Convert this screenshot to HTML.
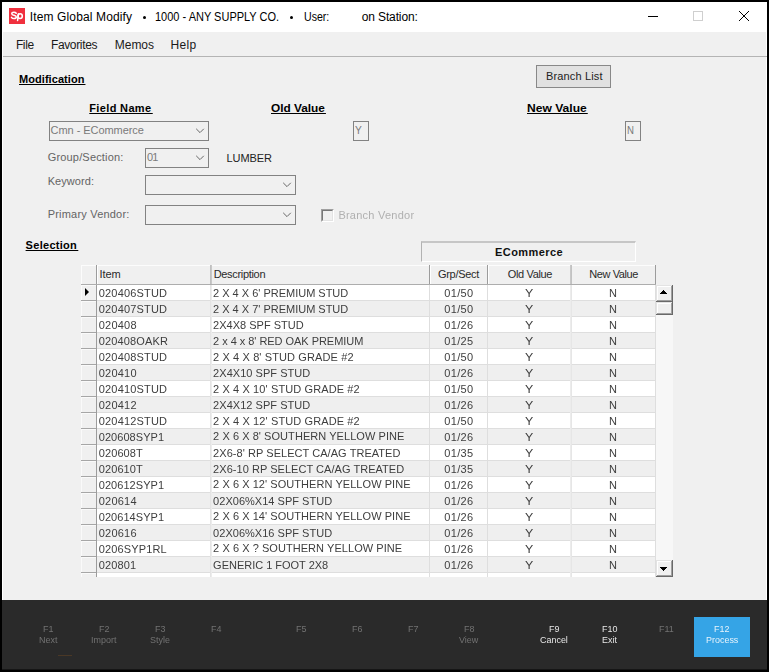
<!DOCTYPE html>
<html>
<head>
<meta charset="utf-8">
<title>Item Global Modify</title>
<style>
html,body{margin:0;padding:0;}
body{width:769px;height:672px;background:#000;overflow:hidden;position:relative;font-family:"Liberation Sans",sans-serif;}
.a{position:absolute;box-sizing:border-box;}
.t{position:absolute;white-space:nowrap;transform-origin:0 50%;font-family:"Liberation Sans",sans-serif;}
.b{font-weight:700;}
.u{text-decoration:underline;text-decoration-thickness:1px;text-underline-offset:1px;}
.combo{background:#f0f0f0;border:1px solid #828282;}
.hl{background:#a0a0a0;}
</style>
</head>
<body>
<!-- window -->
<div class="a" style="left:2px;top:2px;width:765px;height:668px;background:#f0f0f0;"></div>
<!-- title bar -->
<div class="a" style="left:2px;top:2px;width:765px;height:30px;background:#fff;"></div>
<div class="a" style="left:2px;top:32px;width:1px;height:568px;background:#fff;"></div>
<div class="a" style="left:766px;top:32px;width:1px;height:568px;background:#fff;"></div>
<!-- app icon -->
<svg class="a" style="left:9px;top:8px;" width="16" height="16" viewBox="0 0 16 16"><rect width="16" height="16" fill="#f0303e"/><g fill="none" stroke="#fff" stroke-width="1.55" stroke-linecap="round" stroke-linejoin="round"><path d="M7.2 5.3 C6.6 4.4 5.8 4.2 4.9 4.2 C3.5 4.2 2.8 5 2.8 5.8 C2.8 7.9 7.3 6.7 7.3 8.9 C7.3 10 6.3 10.5 5 10.5 C3.9 10.5 3 10.1 2.5 9.3"/><ellipse cx="11.1" cy="8.1" rx="2.2" ry="2.4"/><path d="M9.5 5.9 L8.6 12.5"/></g></svg>
<div class="a" style="left:142.6px;top:15.9px;width:3.2px;height:3.2px;border-radius:50%;background:#000;"></div>
<div class="a" style="left:289.8px;top:15.7px;width:3.2px;height:3.2px;border-radius:50%;background:#000;"></div>
<!-- window controls -->
<div class="a" style="left:648px;top:16px;width:10px;height:1px;background:#000;"></div>
<div class="a" style="left:693px;top:11px;width:10px;height:10px;border:1px solid #cfcfcf;"></div>
<svg class="a" style="left:737px;top:9px;" width="14" height="14" viewBox="0 0 14 14"><path d="M2 2 L12 12 M12 2 L2 12" stroke="#000" stroke-width="1" fill="none"/></svg>
<!-- menu separator -->
<div class="a" style="left:3px;top:56px;width:764px;height:1px;background:#b4b4b4;"></div>

<!-- Branch List button -->
<div class="a" style="left:536px;top:65px;width:75px;height:23px;background:#e1e1e1;border:1px solid #888;"></div>

<!-- combos -->
<div class="a combo" style="left:49px;top:121px;width:160px;height:20px;"></div>
<div class="a combo" style="left:145px;top:148px;width:64px;height:20px;"></div>
<div class="a combo" style="left:145px;top:175px;width:151px;height:20px;"></div>
<div class="a combo" style="left:145px;top:205px;width:151px;height:20px;"></div>
<!-- chevrons -->
<svg class="a" style="left:195.4px;top:127.3px;" width="10" height="8" viewBox="0 0 10 8"><path d="M1.2 1.8 L5 5.6 L8.8 1.8" stroke="#686868" stroke-width="1" fill="none"/></svg>
<svg class="a" style="left:195.4px;top:154.3px;" width="10" height="8" viewBox="0 0 10 8"><path d="M1.2 1.8 L5 5.6 L8.8 1.8" stroke="#686868" stroke-width="1" fill="none"/></svg>
<svg class="a" style="left:282.2px;top:181.3px;" width="10" height="8" viewBox="0 0 10 8"><path d="M1.2 1.8 L5 5.6 L8.8 1.8" stroke="#686868" stroke-width="1" fill="none"/></svg>
<svg class="a" style="left:282.2px;top:211.3px;" width="10" height="8" viewBox="0 0 10 8"><path d="M1.2 1.8 L5 5.6 L8.8 1.8" stroke="#686868" stroke-width="1" fill="none"/></svg>
<!-- Y / N boxes -->
<div class="a combo" style="left:353px;top:121px;width:16px;height:20px;"></div>
<div class="a combo" style="left:625px;top:121px;width:16px;height:20px;"></div>
<!-- checkbox -->
<div class="a" style="left:321px;top:209px;width:13px;height:13px;background:#f0f0f0;border-top:1px solid #a0a0a0;border-left:1px solid #a0a0a0;border-right:1px solid #fff;border-bottom:1px solid #fff;"></div>
<div class="a" style="left:322px;top:210px;width:11px;height:11px;border-top:1px solid #787878;border-left:1px solid #787878;border-right:1px solid #e3e3e3;border-bottom:1px solid #e3e3e3;"></div>

<!-- ECommerce panel -->
<div class="a" style="left:421px;top:241px;width:215px;height:21px;background:#f0f0f0;border-top:2px solid #c6c6c6;border-left:1px solid #b2b2b2;border-right:1px solid #fff;border-bottom:1px solid #fff;"></div>

<!-- GRID -->
<div class="a" style="left:97px;top:285px;width:559px;height:292px;background:#ffffff;"></div>
<div class="a" style="left:97px;top:301px;width:558px;height:15px;background:#efefef;"></div>
<div class="a" style="left:97px;top:333px;width:558px;height:15px;background:#efefef;"></div>
<div class="a" style="left:97px;top:365px;width:558px;height:15px;background:#efefef;"></div>
<div class="a" style="left:97px;top:397px;width:558px;height:15px;background:#efefef;"></div>
<div class="a" style="left:97px;top:429px;width:558px;height:15px;background:#efefef;"></div>
<div class="a" style="left:97px;top:461px;width:558px;height:15px;background:#efefef;"></div>
<div class="a" style="left:97px;top:493px;width:558px;height:15px;background:#efefef;"></div>
<div class="a" style="left:97px;top:525px;width:558px;height:15px;background:#efefef;"></div>
<div class="a" style="left:97px;top:557px;width:558px;height:15px;background:#efefef;"></div>
<div class="a" style="left:97px;top:300px;width:559px;height:1px;background:#dedede;"></div>
<div class="a" style="left:97px;top:316px;width:559px;height:1px;background:#dedede;"></div>
<div class="a" style="left:97px;top:332px;width:559px;height:1px;background:#dedede;"></div>
<div class="a" style="left:97px;top:348px;width:559px;height:1px;background:#dedede;"></div>
<div class="a" style="left:97px;top:364px;width:559px;height:1px;background:#dedede;"></div>
<div class="a" style="left:97px;top:380px;width:559px;height:1px;background:#dedede;"></div>
<div class="a" style="left:97px;top:396px;width:559px;height:1px;background:#dedede;"></div>
<div class="a" style="left:97px;top:412px;width:559px;height:1px;background:#dedede;"></div>
<div class="a" style="left:97px;top:428px;width:559px;height:1px;background:#dedede;"></div>
<div class="a" style="left:97px;top:444px;width:559px;height:1px;background:#dedede;"></div>
<div class="a" style="left:97px;top:460px;width:559px;height:1px;background:#dedede;"></div>
<div class="a" style="left:97px;top:476px;width:559px;height:1px;background:#dedede;"></div>
<div class="a" style="left:97px;top:492px;width:559px;height:1px;background:#dedede;"></div>
<div class="a" style="left:97px;top:508px;width:559px;height:1px;background:#dedede;"></div>
<div class="a" style="left:97px;top:524px;width:559px;height:1px;background:#dedede;"></div>
<div class="a" style="left:97px;top:540px;width:559px;height:1px;background:#dedede;"></div>
<div class="a" style="left:97px;top:556px;width:559px;height:1px;background:#dedede;"></div>
<div class="a" style="left:97px;top:572px;width:559px;height:1px;background:#dedede;"></div>
<div class="a" style="left:210px;top:285px;width:1px;height:292px;background:#e4e4e4;"></div>
<div class="a" style="left:211px;top:285px;width:1px;height:292px;background:#ececec;"></div>
<div class="a" style="left:429px;top:285px;width:1px;height:292px;background:#dedede;"></div>
<div class="a" style="left:487px;top:285px;width:1px;height:292px;background:#dedede;"></div>
<div class="a" style="left:570px;top:285px;width:1px;height:292px;background:#ececec;"></div>
<div class="a" style="left:571px;top:285px;width:1px;height:292px;background:#e6e6e6;"></div>
<div class="a" style="left:655px;top:285px;width:1px;height:292px;background:#dedede;"></div>
<div class="a" style="left:81px;top:265px;width:575px;height:19px;background:#f0f0f0;"></div>
<div class="a" style="left:81px;top:265px;width:575px;height:1px;background:#fcfcfc;"></div>
<div class="a" style="left:81px;top:284px;width:575px;height:1px;background:#adadad;"></div>
<div class="a" style="left:96px;top:265px;width:1px;height:19px;background:#9c9c9c;"></div>
<div class="a" style="left:97px;top:266px;width:1px;height:18px;background:#ffffff;"></div>
<div class="a" style="left:210px;top:265px;width:1px;height:19px;background:#c0c0c0;"></div>
<div class="a" style="left:211px;top:265px;width:1px;height:19px;background:#c8c8c8;"></div>
<div class="a" style="left:429px;top:265px;width:1px;height:19px;background:#9c9c9c;"></div>
<div class="a" style="left:430px;top:266px;width:1px;height:18px;background:#ffffff;"></div>
<div class="a" style="left:487px;top:265px;width:1px;height:19px;background:#9c9c9c;"></div>
<div class="a" style="left:488px;top:266px;width:1px;height:18px;background:#ffffff;"></div>
<div class="a" style="left:570px;top:265px;width:1px;height:19px;background:#c8c8c8;"></div>
<div class="a" style="left:571px;top:265px;width:1px;height:19px;background:#c2c2c2;"></div>
<div class="a" style="left:655px;top:265px;width:1px;height:19px;background:#9c9c9c;"></div>
<div class="a" style="left:81px;top:265px;width:1px;height:19px;background:#fcfcfc;"></div>
<div class="a" style="left:81px;top:285px;width:15px;height:292px;background:#f0f0f0;"></div>
<div class="a" style="left:81px;top:285px;width:1px;height:292px;background:#fafafa;"></div>
<div class="a" style="left:96px;top:285px;width:1px;height:292px;background:#9c9c9c;"></div>
<div class="a" style="left:81px;top:300px;width:15px;height:1px;background:#a6a6a6;"></div>
<div class="a" style="left:82px;top:285px;width:14px;height:1px;background:#fafafa;"></div>
<div class="a" style="left:81px;top:316px;width:15px;height:1px;background:#a6a6a6;"></div>
<div class="a" style="left:82px;top:301px;width:14px;height:1px;background:#fafafa;"></div>
<div class="a" style="left:81px;top:332px;width:15px;height:1px;background:#a6a6a6;"></div>
<div class="a" style="left:82px;top:317px;width:14px;height:1px;background:#fafafa;"></div>
<div class="a" style="left:81px;top:348px;width:15px;height:1px;background:#a6a6a6;"></div>
<div class="a" style="left:82px;top:333px;width:14px;height:1px;background:#fafafa;"></div>
<div class="a" style="left:81px;top:364px;width:15px;height:1px;background:#a6a6a6;"></div>
<div class="a" style="left:82px;top:349px;width:14px;height:1px;background:#fafafa;"></div>
<div class="a" style="left:81px;top:380px;width:15px;height:1px;background:#a6a6a6;"></div>
<div class="a" style="left:82px;top:365px;width:14px;height:1px;background:#fafafa;"></div>
<div class="a" style="left:81px;top:396px;width:15px;height:1px;background:#a6a6a6;"></div>
<div class="a" style="left:82px;top:381px;width:14px;height:1px;background:#fafafa;"></div>
<div class="a" style="left:81px;top:412px;width:15px;height:1px;background:#a6a6a6;"></div>
<div class="a" style="left:82px;top:397px;width:14px;height:1px;background:#fafafa;"></div>
<div class="a" style="left:81px;top:428px;width:15px;height:1px;background:#a6a6a6;"></div>
<div class="a" style="left:82px;top:413px;width:14px;height:1px;background:#fafafa;"></div>
<div class="a" style="left:81px;top:444px;width:15px;height:1px;background:#a6a6a6;"></div>
<div class="a" style="left:82px;top:429px;width:14px;height:1px;background:#fafafa;"></div>
<div class="a" style="left:81px;top:460px;width:15px;height:1px;background:#a6a6a6;"></div>
<div class="a" style="left:82px;top:445px;width:14px;height:1px;background:#fafafa;"></div>
<div class="a" style="left:81px;top:476px;width:15px;height:1px;background:#a6a6a6;"></div>
<div class="a" style="left:82px;top:461px;width:14px;height:1px;background:#fafafa;"></div>
<div class="a" style="left:81px;top:492px;width:15px;height:1px;background:#a6a6a6;"></div>
<div class="a" style="left:82px;top:477px;width:14px;height:1px;background:#fafafa;"></div>
<div class="a" style="left:81px;top:508px;width:15px;height:1px;background:#a6a6a6;"></div>
<div class="a" style="left:82px;top:493px;width:14px;height:1px;background:#fafafa;"></div>
<div class="a" style="left:81px;top:524px;width:15px;height:1px;background:#a6a6a6;"></div>
<div class="a" style="left:82px;top:509px;width:14px;height:1px;background:#fafafa;"></div>
<div class="a" style="left:81px;top:540px;width:15px;height:1px;background:#a6a6a6;"></div>
<div class="a" style="left:82px;top:525px;width:14px;height:1px;background:#fafafa;"></div>
<div class="a" style="left:81px;top:556px;width:15px;height:1px;background:#a6a6a6;"></div>
<div class="a" style="left:82px;top:541px;width:14px;height:1px;background:#fafafa;"></div>
<div class="a" style="left:81px;top:572px;width:15px;height:1px;background:#a6a6a6;"></div>
<div class="a" style="left:82px;top:557px;width:14px;height:1px;background:#fafafa;"></div>
<div class="a" style="left:82px;top:573px;width:14px;height:1px;background:#fafafa;"></div>
<svg class="a" style="left:84px;top:287px;" width="7" height="10" viewBox="0 0 7 10"><path d="M1 1 L5 5 L1 9 Z" fill="#000"/></svg>
<div class="a" style="left:656px;top:285px;width:17px;height:292px;background:#f7f7f7;"></div>
<div class="a" style="left:656px;top:285px;width:17px;height:17px;background:#696969;"></div>
<div class="a" style="left:656px;top:285px;width:16px;height:16px;background:#e3e3e3;"></div>
<div class="a" style="left:657px;top:286px;width:15px;height:15px;background:#a0a0a0;"></div>
<div class="a" style="left:657px;top:286px;width:14px;height:14px;background:#ffffff;"></div>
<div class="a" style="left:658px;top:287px;width:13px;height:13px;background:#f0f0f0;"></div>
<div class="a" style="left:656px;top:302px;width:17px;height:13px;background:#696969;"></div>
<div class="a" style="left:656px;top:302px;width:16px;height:12px;background:#e3e3e3;"></div>
<div class="a" style="left:657px;top:303px;width:15px;height:11px;background:#a0a0a0;"></div>
<div class="a" style="left:657px;top:303px;width:14px;height:10px;background:#ffffff;"></div>
<div class="a" style="left:658px;top:304px;width:13px;height:9px;background:#f0f0f0;"></div>
<div class="a" style="left:656px;top:560px;width:17px;height:17px;background:#696969;"></div>
<div class="a" style="left:656px;top:560px;width:16px;height:16px;background:#e3e3e3;"></div>
<div class="a" style="left:657px;top:561px;width:15px;height:15px;background:#a0a0a0;"></div>
<div class="a" style="left:657px;top:561px;width:14px;height:14px;background:#ffffff;"></div>
<div class="a" style="left:658px;top:562px;width:13px;height:13px;background:#f0f0f0;"></div>
<div class="a" style="left:663px;top:290px;width:1px;height:1px;background:#000;"></div>
<div class="a" style="left:660px;top:567px;width:7px;height:1px;background:#000;"></div>
<div class="a" style="left:662px;top:291px;width:3px;height:1px;background:#000;"></div>
<div class="a" style="left:661px;top:568px;width:5px;height:1px;background:#000;"></div>
<div class="a" style="left:661px;top:292px;width:5px;height:1px;background:#000;"></div>
<div class="a" style="left:662px;top:569px;width:3px;height:1px;background:#000;"></div>
<div class="a" style="left:660px;top:293px;width:7px;height:1px;background:#000;"></div>
<div class="a" style="left:663px;top:570px;width:1px;height:1px;background:#000;"></div>

<!-- footer -->
<div class="a" style="left:2px;top:600px;width:765px;height:70px;background:#2a2a2a;"></div>
<div class="a" style="left:694px;top:617px;width:56px;height:40px;background:#35a4e6;"></div>
<div class="a" style="left:2px;top:669px;width:765px;height:1px;background:#161616;"></div>
<div class="a" style="left:58px;top:655px;width:14px;height:1px;background:#4a3826;"></div>

<span class="t" style="left:29.80px;top:9.0px;font-size:12px;line-height:16px;color:#000;letter-spacing:0.127px;">Item Global Modify</span>
<span class="t" style="left:155.20px;top:9.0px;font-size:12px;line-height:16px;color:#000;transform:scaleX(0.9165);">1000 - ANY SUPPLY CO.</span>
<span class="t" style="left:303.60px;top:9.0px;font-size:12px;line-height:16px;color:#000;transform:scaleX(0.8823);">User:</span>
<span class="t" style="left:361.70px;top:9.0px;font-size:12px;line-height:16px;color:#000;letter-spacing:-0.124px;">on Station:</span>
<span class="t" style="left:15.90px;top:37.0px;font-size:12px;line-height:16px;color:#1a1a1a;letter-spacing:-0.354px;">File</span>
<span class="t" style="left:50.90px;top:37.0px;font-size:12px;line-height:16px;color:#1a1a1a;letter-spacing:-0.343px;">Favorites</span>
<span class="t" style="left:114.80px;top:37.0px;font-size:12px;line-height:16px;color:#1a1a1a;letter-spacing:-0.035px;">Memos</span>
<span class="t" style="left:170.60px;top:37.0px;font-size:12px;line-height:16px;color:#1a1a1a;letter-spacing:0.331px;">Help</span>
<span class="t b u" style="left:19.00px;top:72.0px;font-size:11px;line-height:15px;color:#000;letter-spacing:0.059px;">Modification&#8202;</span>
<span class="t b u" style="left:89.30px;top:101.0px;font-size:11px;line-height:15px;color:#000;letter-spacing:0.348px;">Field Name&#8202;</span>
<span class="t b u" style="left:270.60px;top:101.0px;font-size:11px;line-height:15px;color:#000;transform:scaleX(1.0758);">Old Value&#8202;</span>
<span class="t b u" style="left:526.50px;top:101.0px;font-size:11px;line-height:15px;color:#000;transform:scaleX(1.0977);">New Value&#8202;</span>
<span class="t" style="left:546.00px;top:69.0px;font-size:11px;line-height:15px;color:#222;letter-spacing:0.153px;">Branch List</span>
<span class="t" style="left:50.60px;top:123.0px;font-size:11px;line-height:15px;color:#7a7a7a;letter-spacing:-0.058px;">Cmn - ECommerce</span>
<span class="t" style="left:355.00px;top:123.0px;font-size:11px;line-height:15px;color:#7a7a7a;transform:scaleX(0.9250);">Y</span>
<span class="t" style="left:627.00px;top:123.0px;font-size:11px;line-height:15px;color:#7a7a7a;transform:scaleX(0.8750);">N</span>
<span class="t" style="left:47.70px;top:150.0px;font-size:11px;line-height:15px;color:#646464;letter-spacing:0.176px;">Group/Section:</span>
<span class="t" style="left:147.00px;top:150.0px;font-size:11px;line-height:15px;color:#7a7a7a;letter-spacing:-0.818px;">01</span>
<span class="t" style="left:226.60px;top:151.0px;font-size:11px;line-height:15px;color:#222;letter-spacing:-0.120px;">LUMBER</span>
<span class="t" style="left:47.70px;top:174.0px;font-size:11px;line-height:15px;color:#646464;letter-spacing:0.072px;">Keyword:</span>
<span class="t" style="left:47.70px;top:207.0px;font-size:11px;line-height:15px;color:#646464;letter-spacing:0.199px;">Primary Vendor:</span>
<span class="t b u" style="left:25.60px;top:238.0px;font-size:11px;line-height:15px;color:#000;letter-spacing:0.289px;">Selection&#8202;</span>
<span class="t b" style="left:495.00px;top:245.0px;font-size:11px;line-height:15px;color:#111;letter-spacing:0.428px;">ECommerce</span>
<span class="t" style="left:99.60px;top:267.0px;font-size:11px;line-height:15px;color:#2a2a2a;letter-spacing:-0.143px;">Item</span>
<span class="t" style="left:213.70px;top:267.0px;font-size:11px;line-height:15px;color:#2a2a2a;letter-spacing:-0.320px;">Description</span>
<span class="t" style="left:437.90px;top:267.0px;font-size:11px;line-height:15px;color:#2a2a2a;letter-spacing:-0.278px;">Grp/Sect</span>
<span class="t" style="left:507.80px;top:267.0px;font-size:11px;line-height:15px;color:#2a2a2a;letter-spacing:-0.372px;">Old Value</span>
<span class="t" style="left:589.30px;top:267.0px;font-size:11px;line-height:15px;color:#2a2a2a;letter-spacing:-0.408px;">New Value</span>
<div class="a" style="left:0;top:0;width:769px;height:672px;will-change:transform;">
<span class="t" style="left:338.40px;top:208.0px;font-size:11px;line-height:15px;color:#b0b0b0;letter-spacing:0.241px;">Branch Vendor</span>
<span class="t" style="left:98.80px;top:286.0px;font-size:11px;line-height:15px;color:#3e3e3e;letter-spacing:0.166px;">020406STUD</span>
<span class="t" style="left:213.10px;top:286.0px;font-size:11px;line-height:15px;color:#3e3e3e;letter-spacing:-0.009px;">2 X 4 X 6' PREMIUM STUD</span>
<span class="t" style="left:444.30px;top:286.0px;font-size:11px;line-height:15px;color:#3e3e3e;letter-spacing:0.298px;">01/50</span>
<span class="t" style="left:525.00px;top:286.0px;font-size:11px;line-height:15px;color:#3e3e3e;transform:scaleX(1.1250);">Y</span>
<span class="t" style="left:609.10px;top:286.0px;font-size:11px;line-height:15px;color:#3e3e3e;">N</span>
<span class="t" style="left:98.80px;top:302.0px;font-size:11px;line-height:15px;color:#3e3e3e;letter-spacing:0.166px;">020407STUD</span>
<span class="t" style="left:213.10px;top:302.0px;font-size:11px;line-height:15px;color:#3e3e3e;letter-spacing:-0.009px;">2 X 4 X 7' PREMIUM STUD</span>
<span class="t" style="left:444.30px;top:302.0px;font-size:11px;line-height:15px;color:#3e3e3e;letter-spacing:0.298px;">01/50</span>
<span class="t" style="left:525.00px;top:302.0px;font-size:11px;line-height:15px;color:#3e3e3e;transform:scaleX(1.1250);">Y</span>
<span class="t" style="left:609.10px;top:302.0px;font-size:11px;line-height:15px;color:#3e3e3e;">N</span>
<span class="t" style="left:98.80px;top:318.0px;font-size:11px;line-height:15px;color:#3e3e3e;letter-spacing:0.202px;">020408</span>
<span class="t" style="left:213.10px;top:318.0px;font-size:11px;line-height:15px;color:#3e3e3e;letter-spacing:0.005px;">2X4X8 SPF STUD</span>
<span class="t" style="left:444.30px;top:318.0px;font-size:11px;line-height:15px;color:#3e3e3e;letter-spacing:0.298px;">01/26</span>
<span class="t" style="left:525.00px;top:318.0px;font-size:11px;line-height:15px;color:#3e3e3e;transform:scaleX(1.1250);">Y</span>
<span class="t" style="left:609.10px;top:318.0px;font-size:11px;line-height:15px;color:#3e3e3e;">N</span>
<span class="t" style="left:98.80px;top:334.0px;font-size:11px;line-height:15px;color:#3e3e3e;letter-spacing:0.140px;">020408OAKR</span>
<span class="t" style="left:213.10px;top:334.0px;font-size:11px;line-height:15px;color:#3e3e3e;letter-spacing:-0.039px;">2 x 4 x 8' RED OAK PREMIUM</span>
<span class="t" style="left:444.30px;top:334.0px;font-size:11px;line-height:15px;color:#3e3e3e;letter-spacing:0.298px;">01/25</span>
<span class="t" style="left:525.00px;top:334.0px;font-size:11px;line-height:15px;color:#3e3e3e;transform:scaleX(1.1250);">Y</span>
<span class="t" style="left:609.10px;top:334.0px;font-size:11px;line-height:15px;color:#3e3e3e;">N</span>
<span class="t" style="left:98.80px;top:350.0px;font-size:11px;line-height:15px;color:#3e3e3e;letter-spacing:0.166px;">020408STUD</span>
<span class="t" style="left:213.10px;top:350.0px;font-size:11px;line-height:15px;color:#3e3e3e;letter-spacing:0.113px;">2 X 4 X 8' STUD GRADE #2</span>
<span class="t" style="left:444.30px;top:350.0px;font-size:11px;line-height:15px;color:#3e3e3e;letter-spacing:0.298px;">01/50</span>
<span class="t" style="left:525.00px;top:350.0px;font-size:11px;line-height:15px;color:#3e3e3e;transform:scaleX(1.1250);">Y</span>
<span class="t" style="left:609.10px;top:350.0px;font-size:11px;line-height:15px;color:#3e3e3e;">N</span>
<span class="t" style="left:98.80px;top:366.0px;font-size:11px;line-height:15px;color:#3e3e3e;letter-spacing:0.202px;">020410</span>
<span class="t" style="left:213.10px;top:366.0px;font-size:11px;line-height:15px;color:#3e3e3e;letter-spacing:0.039px;">2X4X10 SPF STUD</span>
<span class="t" style="left:444.30px;top:366.0px;font-size:11px;line-height:15px;color:#3e3e3e;letter-spacing:0.298px;">01/26</span>
<span class="t" style="left:525.00px;top:366.0px;font-size:11px;line-height:15px;color:#3e3e3e;transform:scaleX(1.1250);">Y</span>
<span class="t" style="left:609.10px;top:366.0px;font-size:11px;line-height:15px;color:#3e3e3e;">N</span>
<span class="t" style="left:98.80px;top:382.0px;font-size:11px;line-height:15px;color:#3e3e3e;letter-spacing:0.166px;">020410STUD</span>
<span class="t" style="left:213.10px;top:382.0px;font-size:11px;line-height:15px;color:#3e3e3e;letter-spacing:0.112px;">2 X 4 X 10' STUD GRADE #2</span>
<span class="t" style="left:444.30px;top:382.0px;font-size:11px;line-height:15px;color:#3e3e3e;letter-spacing:0.298px;">01/50</span>
<span class="t" style="left:525.00px;top:382.0px;font-size:11px;line-height:15px;color:#3e3e3e;transform:scaleX(1.1250);">Y</span>
<span class="t" style="left:609.10px;top:382.0px;font-size:11px;line-height:15px;color:#3e3e3e;">N</span>
<span class="t" style="left:98.80px;top:398.0px;font-size:11px;line-height:15px;color:#3e3e3e;letter-spacing:0.202px;">020412</span>
<span class="t" style="left:213.10px;top:398.0px;font-size:11px;line-height:15px;color:#3e3e3e;letter-spacing:0.039px;">2X4X12 SPF STUD</span>
<span class="t" style="left:444.30px;top:398.0px;font-size:11px;line-height:15px;color:#3e3e3e;letter-spacing:0.298px;">01/26</span>
<span class="t" style="left:525.00px;top:398.0px;font-size:11px;line-height:15px;color:#3e3e3e;transform:scaleX(1.1250);">Y</span>
<span class="t" style="left:609.10px;top:398.0px;font-size:11px;line-height:15px;color:#3e3e3e;">N</span>
<span class="t" style="left:98.80px;top:414.0px;font-size:11px;line-height:15px;color:#3e3e3e;letter-spacing:0.166px;">020412STUD</span>
<span class="t" style="left:213.10px;top:414.0px;font-size:11px;line-height:15px;color:#3e3e3e;letter-spacing:0.112px;">2 X 4 X 12' STUD GRADE #2</span>
<span class="t" style="left:444.30px;top:414.0px;font-size:11px;line-height:15px;color:#3e3e3e;letter-spacing:0.298px;">01/50</span>
<span class="t" style="left:525.00px;top:414.0px;font-size:11px;line-height:15px;color:#3e3e3e;transform:scaleX(1.1250);">Y</span>
<span class="t" style="left:609.10px;top:414.0px;font-size:11px;line-height:15px;color:#3e3e3e;">N</span>
<span class="t" style="left:98.80px;top:430.0px;font-size:11px;line-height:15px;color:#3e3e3e;letter-spacing:0.043px;">020608SYP1</span>
<span class="t" style="left:213.10px;top:429.0px;font-size:11px;line-height:15px;color:#3e3e3e;letter-spacing:0.056px;">2 X 6 X 8' SOUTHERN YELLOW PINE</span>
<span class="t" style="left:444.30px;top:430.0px;font-size:11px;line-height:15px;color:#3e3e3e;letter-spacing:0.298px;">01/26</span>
<span class="t" style="left:525.00px;top:430.0px;font-size:11px;line-height:15px;color:#3e3e3e;transform:scaleX(1.1250);">Y</span>
<span class="t" style="left:609.10px;top:430.0px;font-size:11px;line-height:15px;color:#3e3e3e;">N</span>
<span class="t" style="left:98.80px;top:446.0px;font-size:11px;line-height:15px;color:#3e3e3e;letter-spacing:0.082px;">020608T</span>
<span class="t" style="left:213.10px;top:446.0px;font-size:11px;line-height:15px;color:#3e3e3e;letter-spacing:0.050px;">2X6-8' RP SELECT CA/AG TREATED</span>
<span class="t" style="left:444.30px;top:446.0px;font-size:11px;line-height:15px;color:#3e3e3e;letter-spacing:0.298px;">01/35</span>
<span class="t" style="left:525.00px;top:446.0px;font-size:11px;line-height:15px;color:#3e3e3e;transform:scaleX(1.1250);">Y</span>
<span class="t" style="left:609.10px;top:446.0px;font-size:11px;line-height:15px;color:#3e3e3e;">N</span>
<span class="t" style="left:98.80px;top:462.0px;font-size:11px;line-height:15px;color:#3e3e3e;letter-spacing:0.082px;">020610T</span>
<span class="t" style="left:213.10px;top:462.0px;font-size:11px;line-height:15px;color:#3e3e3e;letter-spacing:0.039px;">2X6-10 RP SELECT CA/AG TREATED</span>
<span class="t" style="left:444.30px;top:462.0px;font-size:11px;line-height:15px;color:#3e3e3e;letter-spacing:0.298px;">01/35</span>
<span class="t" style="left:525.00px;top:462.0px;font-size:11px;line-height:15px;color:#3e3e3e;transform:scaleX(1.1250);">Y</span>
<span class="t" style="left:609.10px;top:462.0px;font-size:11px;line-height:15px;color:#3e3e3e;">N</span>
<span class="t" style="left:98.80px;top:478.0px;font-size:11px;line-height:15px;color:#3e3e3e;letter-spacing:0.043px;">020612SYP1</span>
<span class="t" style="left:213.10px;top:477.0px;font-size:11px;line-height:15px;color:#3e3e3e;letter-spacing:0.057px;">2 X 6 X 12' SOUTHERN YELLOW PINE</span>
<span class="t" style="left:444.30px;top:478.0px;font-size:11px;line-height:15px;color:#3e3e3e;letter-spacing:0.298px;">01/26</span>
<span class="t" style="left:525.00px;top:478.0px;font-size:11px;line-height:15px;color:#3e3e3e;transform:scaleX(1.1250);">Y</span>
<span class="t" style="left:609.10px;top:478.0px;font-size:11px;line-height:15px;color:#3e3e3e;">N</span>
<span class="t" style="left:98.80px;top:494.0px;font-size:11px;line-height:15px;color:#3e3e3e;letter-spacing:0.202px;">020614</span>
<span class="t" style="left:213.10px;top:494.0px;font-size:11px;line-height:15px;color:#3e3e3e;letter-spacing:0.026px;">02X06%X14 SPF STUD</span>
<span class="t" style="left:444.30px;top:494.0px;font-size:11px;line-height:15px;color:#3e3e3e;letter-spacing:0.298px;">01/26</span>
<span class="t" style="left:525.00px;top:494.0px;font-size:11px;line-height:15px;color:#3e3e3e;transform:scaleX(1.1250);">Y</span>
<span class="t" style="left:609.10px;top:494.0px;font-size:11px;line-height:15px;color:#3e3e3e;">N</span>
<span class="t" style="left:98.80px;top:510.0px;font-size:11px;line-height:15px;color:#3e3e3e;letter-spacing:0.043px;">020614SYP1</span>
<span class="t" style="left:213.10px;top:509.0px;font-size:11px;line-height:15px;color:#3e3e3e;letter-spacing:0.057px;">2 X 6 X 14' SOUTHERN YELLOW PINE</span>
<span class="t" style="left:444.30px;top:510.0px;font-size:11px;line-height:15px;color:#3e3e3e;letter-spacing:0.298px;">01/26</span>
<span class="t" style="left:525.00px;top:510.0px;font-size:11px;line-height:15px;color:#3e3e3e;transform:scaleX(1.1250);">Y</span>
<span class="t" style="left:609.10px;top:510.0px;font-size:11px;line-height:15px;color:#3e3e3e;">N</span>
<span class="t" style="left:98.80px;top:526.0px;font-size:11px;line-height:15px;color:#3e3e3e;letter-spacing:0.202px;">020616</span>
<span class="t" style="left:213.10px;top:526.0px;font-size:11px;line-height:15px;color:#3e3e3e;letter-spacing:0.026px;">02X06%X16 SPF STUD</span>
<span class="t" style="left:444.30px;top:526.0px;font-size:11px;line-height:15px;color:#3e3e3e;letter-spacing:0.298px;">01/26</span>
<span class="t" style="left:525.00px;top:526.0px;font-size:11px;line-height:15px;color:#3e3e3e;transform:scaleX(1.1250);">Y</span>
<span class="t" style="left:609.10px;top:526.0px;font-size:11px;line-height:15px;color:#3e3e3e;">N</span>
<span class="t" style="left:98.80px;top:542.0px;font-size:11px;line-height:15px;color:#3e3e3e;letter-spacing:0.140px;">0206SYP1RL</span>
<span class="t" style="left:213.10px;top:541.0px;font-size:11px;line-height:15px;color:#3e3e3e;letter-spacing:0.054px;">2 X 6 X ? SOUTHERN YELLOW PINE</span>
<span class="t" style="left:444.30px;top:542.0px;font-size:11px;line-height:15px;color:#3e3e3e;letter-spacing:0.298px;">01/26</span>
<span class="t" style="left:525.00px;top:542.0px;font-size:11px;line-height:15px;color:#3e3e3e;transform:scaleX(1.1250);">Y</span>
<span class="t" style="left:609.10px;top:542.0px;font-size:11px;line-height:15px;color:#3e3e3e;">N</span>
<span class="t" style="left:98.80px;top:558.0px;font-size:11px;line-height:15px;color:#3e3e3e;letter-spacing:0.122px;">020801</span>
<span class="t" style="left:213.10px;top:558.0px;font-size:11px;line-height:15px;color:#3e3e3e;letter-spacing:-0.012px;">GENERIC 1 FOOT 2X8</span>
<span class="t" style="left:444.30px;top:558.0px;font-size:11px;line-height:15px;color:#3e3e3e;letter-spacing:0.298px;">01/26</span>
<span class="t" style="left:525.00px;top:558.0px;font-size:11px;line-height:15px;color:#3e3e3e;transform:scaleX(1.1250);">Y</span>
<span class="t" style="left:609.10px;top:558.0px;font-size:11px;line-height:15px;color:#3e3e3e;">N</span>
<span class="t" style="left:42.91px;top:622.4px;font-size:9.5px;line-height:13.5px;color:#727272;transform:scaleX(0.942);">F1</span>
<span class="t" style="left:38.63px;top:633.0px;font-size:9.5px;line-height:13.5px;color:#727272;transform:scaleX(0.942);">Next</span>
<span class="t" style="left:98.91px;top:622.4px;font-size:9.5px;line-height:13.5px;color:#727272;transform:scaleX(0.942);">F2</span>
<span class="t" style="left:91.15px;top:633.0px;font-size:9.5px;line-height:13.5px;color:#727272;transform:scaleX(0.942);">Import</span>
<span class="t" style="left:154.91px;top:622.4px;font-size:9.5px;line-height:13.5px;color:#727272;transform:scaleX(0.942);">F3</span>
<span class="t" style="left:150.19px;top:633.0px;font-size:9.5px;line-height:13.5px;color:#727272;transform:scaleX(0.942);">Style</span>
<span class="t" style="left:210.91px;top:622.4px;font-size:9.5px;line-height:13.5px;color:#727272;transform:scaleX(0.942);">F4</span>
<span class="t" style="left:295.51px;top:622.4px;font-size:9.5px;line-height:13.5px;color:#727272;transform:scaleX(0.942);">F5</span>
<span class="t" style="left:351.51px;top:622.4px;font-size:9.5px;line-height:13.5px;color:#727272;transform:scaleX(0.942);">F6</span>
<span class="t" style="left:407.51px;top:622.4px;font-size:9.5px;line-height:13.5px;color:#727272;transform:scaleX(0.942);">F7</span>
<span class="t" style="left:463.51px;top:622.4px;font-size:9.5px;line-height:13.5px;color:#727272;transform:scaleX(0.942);">F8</span>
<span class="t" style="left:458.92px;top:633.0px;font-size:9.5px;line-height:13.5px;color:#727272;transform:scaleX(0.942);">View</span>
<span class="t" style="left:548.91px;top:622.4px;font-size:9.5px;line-height:13.5px;color:#e6e6e6;transform:scaleX(0.942);">F9</span>
<span class="t" style="left:540.12px;top:633.0px;font-size:9.5px;line-height:13.5px;color:#e6e6e6;transform:scaleX(0.942);">Cancel</span>
<span class="t" style="left:601.92px;top:622.4px;font-size:9.5px;line-height:13.5px;color:#e6e6e6;transform:scaleX(0.942);">F10</span>
<span class="t" style="left:601.87px;top:633.0px;font-size:9.5px;line-height:13.5px;color:#e6e6e6;transform:scaleX(0.942);">Exit</span>
<span class="t" style="left:658.76px;top:622.4px;font-size:9.5px;line-height:13.5px;color:#727272;transform:scaleX(0.942);">F11</span>
<span class="t" style="left:714.42px;top:622.4px;font-size:9.5px;line-height:13.5px;color:#e6f3fc;transform:scaleX(0.942);">F12</span>
<span class="t" style="left:705.72px;top:633.0px;font-size:9.5px;line-height:13.5px;color:#e6f3fc;transform:scaleX(0.942);">Process</span>
</div>
</body>
</html>
